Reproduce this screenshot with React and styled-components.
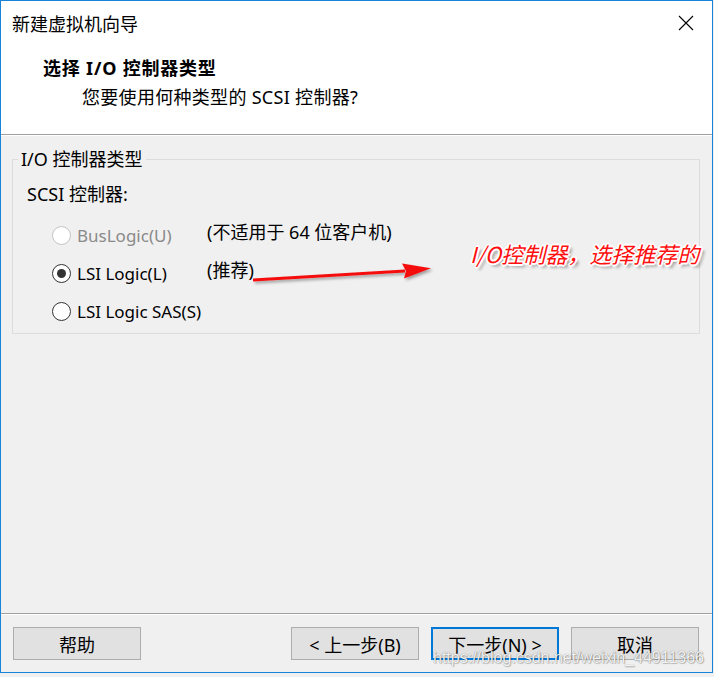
import React from "react";
import styled, { createGlobalStyle } from "styled-components";

const GlobalStyle = createGlobalStyle`
  body {
    margin: 0;
    background: #f0f0f0;
    font-family: "Noto Sans", "Noto Sans CJK SC", sans-serif;
  }
`;

const Window = styled.div`
  position: relative;
  box-sizing: border-box;
  width: 713px;
  height: 673px;
  border: 1px solid #1883d7;
  background: #f0f0f0;
  display: flex;
  flex-direction: column;
  overflow: hidden;
`;

const TitleBar = styled.div`
  height: 44px;
  flex: 0 0 auto;
  background: #fff;
  display: flex;
  align-items: center;
  justify-content: space-between;
  padding: 0 18px 0 11px;
  font-size: 18px;
  color: #000;
`;

const Header = styled.div`
  box-sizing: border-box;
  height: 90px;
  flex: 0 0 auto;
  background: #fff;
  border-bottom: 1px solid #a0a0a0;
  padding: 10px 0 0 42px;
`;

const HeaderTitle = styled.div`
  font-size: 18px;
  font-weight: bold;
  letter-spacing: 0.8px;
  line-height: 26px;
  color: #000;
`;

const HeaderSub = styled.div`
  font-size: 18px;
  letter-spacing: 0.3px;
  line-height: 26px;
  margin: 3px 0 0 39px;
  color: #000;
`;

const Body = styled.div`
  flex: 1 1 auto;
  border-top: 1px solid #fff;
  padding-top: 11px;
`;

const Group = styled.fieldset`
  box-sizing: border-box;
  margin: 0 12px 0 11px;
  padding: 0 0 3px 14px;
  border: 1px solid #dcdcdc;
  min-width: 0;
`;

const Legend = styled.legend`
  font-size: 18px;
  line-height: 24px;
  padding: 0 3px;
  margin-left: -9px;
  color: #000;
`;

const Label = styled.div`
  font-size: 18px;
  line-height: 26px;
  margin-top: 10px;
  margin-bottom: 9px;
  color: #000;
`;

const Options = styled.div`
  display: grid;
  grid-template-columns: 155px 1fr;
  grid-auto-rows: 38px;
  margin-left: 25px;
`;

const Option = styled.label`
  display: flex;
  align-items: center;
  gap: 6px;
  font-size: 17px;
  color: ${(p) => (p.disabled ? "#8a8a8a" : "#000")};
`;

const Radio = styled.span`
  box-sizing: border-box;
  width: 19px;
  height: 19px;
  border-radius: 50%;
  border: 1px solid ${(p) => (p.disabled ? "#c4c4c4" : "#333")};
  background: #fff;
  display: flex;
  align-items: center;
  justify-content: center;

  &::after {
    content: "";
    width: 9px;
    height: 9px;
    border-radius: 50%;
    background: ${(p) => (p.checked ? "#333" : "transparent")};
  }
`;

const Note = styled.div`
  display: flex;
  align-items: center;
  font-size: 18px;
  color: #000;
  margin-top: -9px;
`;

const Footer = styled.div`
  box-sizing: border-box;
  height: 59px;
  flex: 0 0 auto;
  border-top: 1px solid #a0a0a0;
  box-shadow: inset 0 1px 0 #fff;
  display: flex;
  align-items: flex-start;
  padding: 13px 13px 0 12px;
  gap: 12px;
`;

const Spacer = styled.div`
  flex: 1;
`;

const Button = styled.button`
  box-sizing: border-box;
  width: 128px;
  height: 33px;
  background: #e1e1e1;
  border: ${(p) => (p.primary ? "2px solid #0078d7" : "1px solid #adadad")};
  font-family: "Noto Sans", "Noto Sans CJK SC", sans-serif;
  font-size: 18px;
  color: #000;
  padding: 0;
`;

const Overlay = styled.svg`
  position: absolute;
  left: 0;
  top: 0;
  pointer-events: none;
`;

const Callout = styled.div`
  position: absolute;
  left: 469px;
  top: 237px;
  font-family: "Noto Sans CJK SC", sans-serif;
  font-size: 22px;
  line-height: 30px;
  font-style: italic;
  color: #ff1010;
  white-space: nowrap;
  text-shadow: -1px -1px 0 #fff, 1px -1px 0 #fff, -1px 1px 0 #fff,
    1px 1px 0 #fff, 0 -2px 0 #fff, 0 2px 0 #fff, -2px 0 0 #fff,
    2px 0 0 #fff, 3px 3px 3px rgba(0, 0, 0, 0.45);
`;

const Watermark = styled.div`
  position: absolute;
  left: 432px;
  top: 647px;
  font-family: "Liberation Sans", Arial, sans-serif;
  font-size: 16px;
  line-height: 20px;
  color: rgba(255, 255, 255, 0.92);
  white-space: nowrap;
  text-shadow: 0 0 1px rgba(0, 0, 0, 0.5), 1px 1px 1px rgba(0, 0, 0, 0.2);
`;

const CloseIcon = () => (
  <svg width="16" height="16" viewBox="0 0 16 16">
    <path d="M1 1 L15 15 M15 1 L1 15" stroke="#000" strokeWidth="1.1" />
  </svg>
);

const options = [
  { label: "BusLogic(U)", note: "(不适用于 64 位客户机)", disabled: true },
  { label: "LSI Logic(L)", note: "(推荐)", checked: true },
  { label: "LSI Logic SAS(S)", note: "" }
];

export default function App() {
  return (
    <>
      <GlobalStyle />
      <Window>
        <TitleBar>
          <span>新建虚拟机向导</span>
          <CloseIcon />
        </TitleBar>
        <Header>
          <HeaderTitle>选择 I/O 控制器类型</HeaderTitle>
          <HeaderSub>您要使用何种类型的 SCSI 控制器?</HeaderSub>
        </Header>
        <Body>
          <Group>
            <Legend>I/O 控制器类型</Legend>
            <Label>SCSI 控制器:</Label>
            <Options>
              {options.map((o) => (
                <React.Fragment key={o.label}>
                  <Option disabled={o.disabled}>
                    <Radio checked={o.checked} disabled={o.disabled} />
                    {o.label}
                  </Option>
                  <Note>{o.note}</Note>
                </React.Fragment>
              ))}
            </Options>
          </Group>
        </Body>
        <Footer>
          <Button>帮助</Button>
          <Spacer />
          <Button>&lt; 上一步(B)</Button>
          <Button primary>下一步(N) &gt;</Button>
          <Button>取消</Button>
        </Footer>
        <Overlay width="713" height="673">
          <defs>
            <filter id="sh" x="-10%" y="-50%" width="120%" height="200%">
              <feDropShadow dx="2" dy="2" stdDeviation="1.5" floodColor="#000" floodOpacity="0.35" />
            </filter>
          </defs>
          <g filter="url(#sh)" fill="#f51010">
            <path d="M252 277.5 L404 268.5 L404 271.5 L252 280.5 Z" />
            <path d="M430 267.2 L401 262.5 L405 270 L403 277.5 Z" />
          </g>
        </Overlay>
        <Callout>I/O控制器，选择推荐的</Callout>
        <Watermark>https://blog.csdn.net/weixin_44911366</Watermark>
      </Window>
    </>
  );
}
